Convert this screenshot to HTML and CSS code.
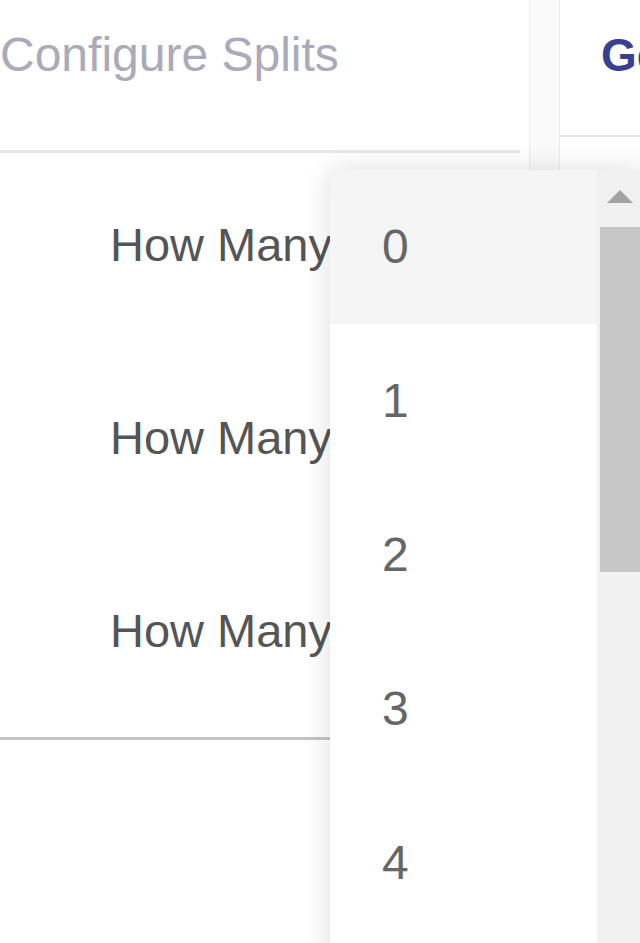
FILE: index.html
```html
<!DOCTYPE html>
<html lang="en">
<head>
    <meta charset="UTF-8">
    <meta name="viewport" content="width=device-width, initial-scale=1.0">
    <title>Configure Splits</title>
    <link rel="stylesheet" href="styles.css">
</head>
<body>
    <div class="layout">
        <div class="left-panel">
            <div class="panel-header">Configure Splits</div>
            <div class="rows">
                <div class="row">How Many Splits?</div>
                <div class="row">How Many Weeks?</div>
                <div class="row">How Many Sets?</div>
            </div>
        </div>
        <div class="splitter"></div>
        <div class="right-panel">
            <div class="right-header">General</div>
        </div>
    </div>

    <!-- liste déroulante ouverte -->
    <div class="dropdown">
        <ul class="options">
            <li class="option active">0</li>
            <li class="option">1</li>
            <li class="option">2</li>
            <li class="option">3</li>
            <li class="option">4</li>
            <li class="option">5</li>
        </ul>
        <div class="scrollbar">
            <div class="scroll-arrow"></div>
            <div class="scroll-thumb"></div>
        </div>
    </div>
</body>
</html>
```

FILE: styles.css
```css
body {
    font-family: "Liberation Sans", Arial, sans-serif;
    margin: 0;
    padding: 0;
    background: white;
    width: 640px;
    height: 943px;
    overflow: hidden;
    position: relative;
}

.layout {
    display: flex;
    height: 943px;
}

.left-panel {
    width: 520px;
    flex-shrink: 0;
}

.panel-header {
    height: 123px;
    padding-top: 27px;
    font-size: 48px;
    line-height: 56px;
    color: #aaaabb;
    border-bottom: 3px solid #e8e8e8;
}

.row {
    height: 129px;
    padding-top: 64px;
    padding-left: 110px;
    font-size: 47px;
    line-height: 56px;
    color: #555;
    white-space: nowrap;
}

.row:last-child {
    height: 134px;
    border-bottom: 3px solid #c4c4c4;
}

/* Barre de séparation entre les deux panneaux */
.splitter {
    width: 29px;
    margin-left: 9px;
    background: #fafafa;
    border-left: 1px solid #ececec;
    border-right: 1px solid #ececec;
    height: 170px;
}

.right-panel {
    flex: 1;
    min-width: 0;
}

.right-header {
    height: 108px;
    padding-top: 27px;
    padding-left: 41px;
    font-size: 46px;
    line-height: 56px;
    font-weight: bold;
    color: #3b3f92;
    border-bottom: 2px solid #e6e6e6;
    white-space: nowrap;
    overflow: hidden;
}

/* Menu déroulant */
.dropdown {
    position: absolute;
    left: 330px;
    top: 170px;
    width: 313px;
    height: 800px;
    background: white;
    border-top-left-radius: 8px;
    box-shadow: 0 0 28px rgba(0, 0, 0, 0.13);
    display: flex;
    overflow: hidden;
}

.options {
    list-style: none;
    margin: 0;
    padding: 0;
    flex: 1;
}

.option {
    height: 154px;
    display: flex;
    align-items: center;
    padding-left: 52px;
    font-size: 48px;
    line-height: 56px;
    color: #666;
}

.option.active {
    background: #f5f5f5;
}

.scrollbar {
    width: 46px;
    background: #f1f1f1;
    display: flex;
    flex-direction: column;
}

.scroll-arrow {
    height: 57px;
    display: flex;
    align-items: center;
    justify-content: center;
}

.scroll-arrow::before {
    content: "";
    width: 0;
    height: 0;
    border-left: 13px solid transparent;
    border-right: 13px solid transparent;
    border-bottom: 13px solid #a3a3a3;
    margin-top: -4px;
}

.scroll-thumb {
    height: 345px;
    margin-left: 3px;
    margin-right: 3px;
    background: #c6c6c6;
}
```
